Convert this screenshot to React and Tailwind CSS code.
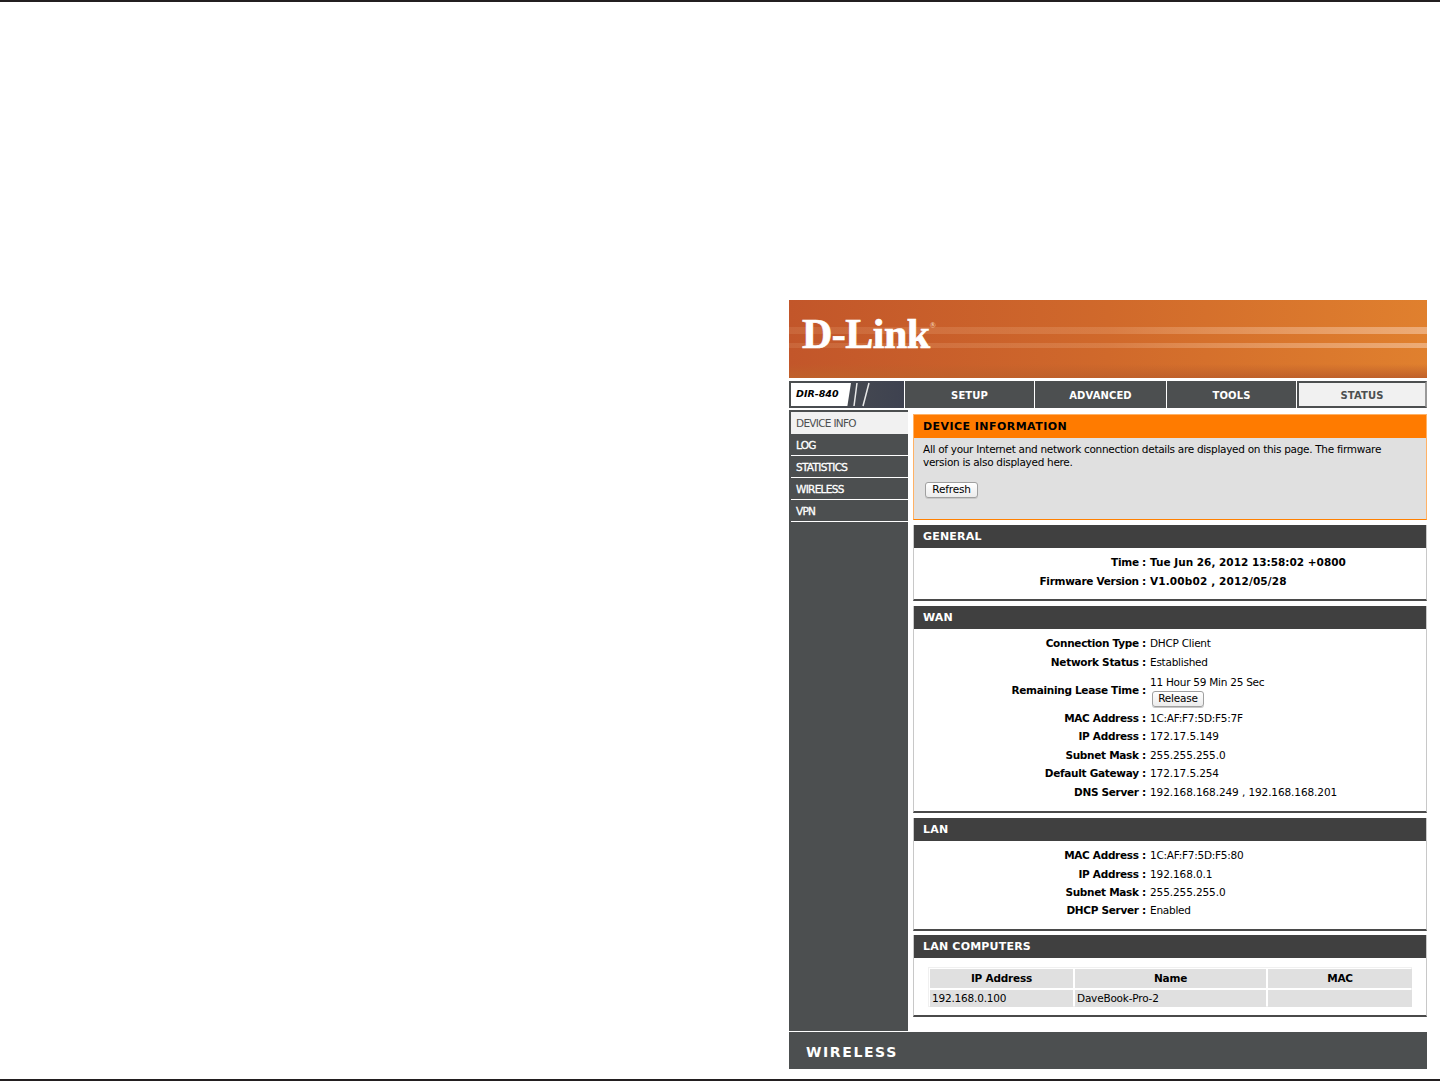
const font = "font-['DejaVu_Sans',Verdana,sans-serif]";

const tabs = ["SETUP", "ADVANCED", "TOOLS"];
const sideItems = ["LOG", "STATISTICS", "WIRELESS", "VPN"];

function Section({ title, className, children }) {
  return (
    <div className={`shrink-0 border-b-2 border-x border-[#4a4a4a] border-x-[#c8c8c8] bg-white ${className}`}>
      <div className="h-[23px] bg-[#404040] pl-[9px] text-[11px] font-bold leading-[24px] tracking-[0.2px] text-white">{title}</div>
      {children}
    </div>
  );
}

function Row({ label, children, className = "h-[18.4px]" }) {
  return (
    <div className={`flex items-center ${className}`}>
      <div className="w-[232px] shrink-0 text-right text-[10.5px] font-bold tracking-[-0.3px] text-black">{label} :</div>
      <div className="pl-[4px] text-[10.5px] tracking-[-0.25px] text-black">{children}</div>
    </div>
  );
}

function Btn({ children, className }) {
  return (
    <button className={`flex h-[16px] items-center justify-center rounded-[3px] border border-[#a0a0a0] bg-gradient-to-b from-white to-[#ececec] text-[10.5px] tracking-[-0.2px] text-black shadow-[0_1px_0_#c8c8c8] ${className}`}>
      {children}
    </button>
  );
}

export default function App() {
  return (
    <div className={`flex h-[1081px] w-[1440px] flex-col border-y-2 border-[#231f20] bg-white pl-[789px] pt-[298px] ${font}`}>
      <div className="flex h-[769px] w-[638px] flex-col">
        <div className="relative h-[78px] overflow-hidden bg-gradient-to-r from-[#c2562a] via-[#d0692b] to-[#e0802e]">
          <div className="absolute inset-x-0 top-[27px] h-[7px] bg-gradient-to-r from-[#d98a5f]/30 via-[#e59a6a]/40 to-[#eeb07f]/90" />
          <div className="absolute inset-x-0 top-[43px] h-[5px] bg-gradient-to-r from-[#d98a5f]/30 via-[#e59a6a]/40 to-[#eeb07f]/90" />
          <div className="absolute inset-x-0 bottom-0 h-[14px] bg-gradient-to-b from-transparent to-[#bf602a]" />
          <div className="relative flex h-full items-start pl-[13px] pt-[10px] font-['Liberation_Serif',serif] text-[42px] font-bold leading-[48px] tracking-[-0.5px] text-white [-webkit-text-stroke:0.7px_white]">
            D-Link<span className="mt-[11px] text-[8px] leading-[10px] tracking-normal text-[#f1c9a8] [-webkit-text-stroke:0]">®</span>
          </div>
        </div>

        <div className="mt-[3px] flex h-[27px] gap-px">
          <div className="relative flex w-[115px] items-center overflow-hidden bg-gradient-to-r from-[#4c4f50] to-[#3e4250] p-[2px]">
            <div className="flex h-[23px] w-[60px] items-center bg-white pl-[5px] text-[9.5px] font-bold italic text-black [clip-path:polygon(0_0,100%_0,94%_100%,0_100%)]">DIR-840</div>
            <svg className="absolute left-[60px] top-0" width="30" height="27" viewBox="0 0 30 27">
              <path d="M8 2 L5 25 M20 2 L14 25" stroke="#e8e8e8" strokeWidth="1.5" fill="none" />
            </svg>
          </div>
          {tabs.map((t, i) => (
            <div key={t} className={`flex items-center justify-center bg-[#4c4f50] pt-[2px] text-[10px] font-bold tracking-[0.1px] text-white ${i == 1 ? "w-[131px]" : "w-[129px]"}`}>{t}</div>
          ))}
          <div className="flex w-[130px] items-center justify-center border-[2px] border-[#4c4f50] border-r-[#999] bg-[#f1f1f1] pt-[2px] text-[10px] font-bold tracking-[0.1px] text-[#4c4f50]">STATUS</div>
        </div>

        <div className="mt-[2px] flex h-[621px]">
          <div className="w-[119px] shrink-0 bg-[#4c4f50] pl-[2px] pt-[2px] text-[10.5px] tracking-[-0.7px]">
            <div className="h-[22px] bg-[#f1f1f1] pl-[5px] leading-[22px] text-[#4c4f50]">DEVICE INFO</div>
            {sideItems.map((s) => (
              <div key={s} className="h-[22px] border-b border-white pl-[5px] leading-[22px] text-white [-webkit-text-stroke:0.3px_white]">{s}</div>
            ))}
          </div>

          <div className="ml-[5px] flex w-[514px] flex-col">
            <div className="mt-[4px] h-[106px] shrink-0 border border-[#ffb266] border-b-[#ff8000] bg-[#e0e0e0]">
              <div className="h-[23px] bg-[#ff7b00] pl-[9px] text-[11px] font-bold leading-[24px] tracking-[0.45px] text-black">DEVICE INFORMATION</div>
              <p className="pl-[9px] pt-[5px] text-[10.5px] leading-[13px] tracking-[-0.3px] text-black">
                All of your Internet and network connection details are displayed on this page. The firmware<br />version is also displayed here.
              </p>
              <div className="pl-[11px] pt-[13px]"><Btn className="w-[53px]">Refresh</Btn></div>
            </div>

            <Section title="GENERAL" className="mt-[5px] h-[76px]">
              <div className="pt-[6px]">
                <Row label="Time"><span className="font-bold tracking-[0px]">Tue Jun 26, 2012 13:58:02 +0800</span></Row>
                <Row label="Firmware Version"><span className="font-bold tracking-[0.15px]">V1.00b02 , 2012/05/28</span></Row>
              </div>
            </Section>

            <Section title="WAN" className="mt-[5px] h-[207px]">
              <div className="pt-[6px]">
                <Row label="Connection Type">DHCP Client</Row>
                <Row label="Network Status">Established</Row>
                <Row label="Remaining Lease Time" className="h-[38px]">
                  <div className="leading-[14px]">11 Hour 59 Min 25 Sec</div>
                  <div className="ml-[2px] mt-[2px]"><Btn className="w-[52px]">Release</Btn></div>
                </Row>
                <Row label="MAC Address">1C:AF:F7:5D:F5:7F</Row>
                <Row label="IP Address"><span className="tracking-[-0.1px]">172.17.5.149</span></Row>
                <Row label="Subnet Mask"><span className="tracking-[-0.1px]">255.255.255.0</span></Row>
                <Row label="Default Gateway"><span className="tracking-[-0.1px]">172.17.5.254</span></Row>
                <Row label="DNS Server"><span className="tracking-[-0.1px]">192.168.168.249 , 192.168.168.201</span></Row>
              </div>
            </Section>

            <Section title="LAN" className="mt-[5px] h-[113px]">
              <div className="pt-[6px]">
                <Row label="MAC Address">1C:AF:F7:5D:F5:80</Row>
                <Row label="IP Address"><span className="tracking-[-0.1px]">192.168.0.1</span></Row>
                <Row label="Subnet Mask"><span className="tracking-[-0.1px]">255.255.255.0</span></Row>
                <Row label="DHCP Server">Enabled</Row>
              </div>
            </Section>

            <Section title="LAN COMPUTERS" className="mt-[4px] h-[82px]">
              <div className="px-[14px] pt-[9px]">
                <div className="grid h-[40px] w-[484px] grid-cols-[145px_193px_146px] grid-rows-[21px_19px] border border-[#f0f0f0] text-[10.5px] tracking-[-0.2px] text-black">
                  <div className="m-px flex items-center justify-center bg-[#e0e0e0] font-bold">IP Address</div>
                  <div className="m-px flex items-center justify-center bg-[#e0e0e0] font-bold">Name</div>
                  <div className="m-px flex items-center justify-center bg-[#e0e0e0] font-bold">MAC</div>
                  <div className="m-px flex items-center bg-[#e0e0e0] pl-[2px]">192.168.0.100</div>
                  <div className="m-px flex items-center bg-[#e0e0e0] pl-[2px]">DaveBook-Pro-2</div>
                  <div className="m-px bg-[#e0e0e0]" />
                </div>
              </div>
            </Section>
          </div>
        </div>

        <div className="mt-px flex h-[37px] items-center bg-[#4c4f50] pl-[17px] pt-[3px] text-[14px] font-bold tracking-[1.6px] text-white">WIRELESS</div>
      </div>
    </div>
  );
}
